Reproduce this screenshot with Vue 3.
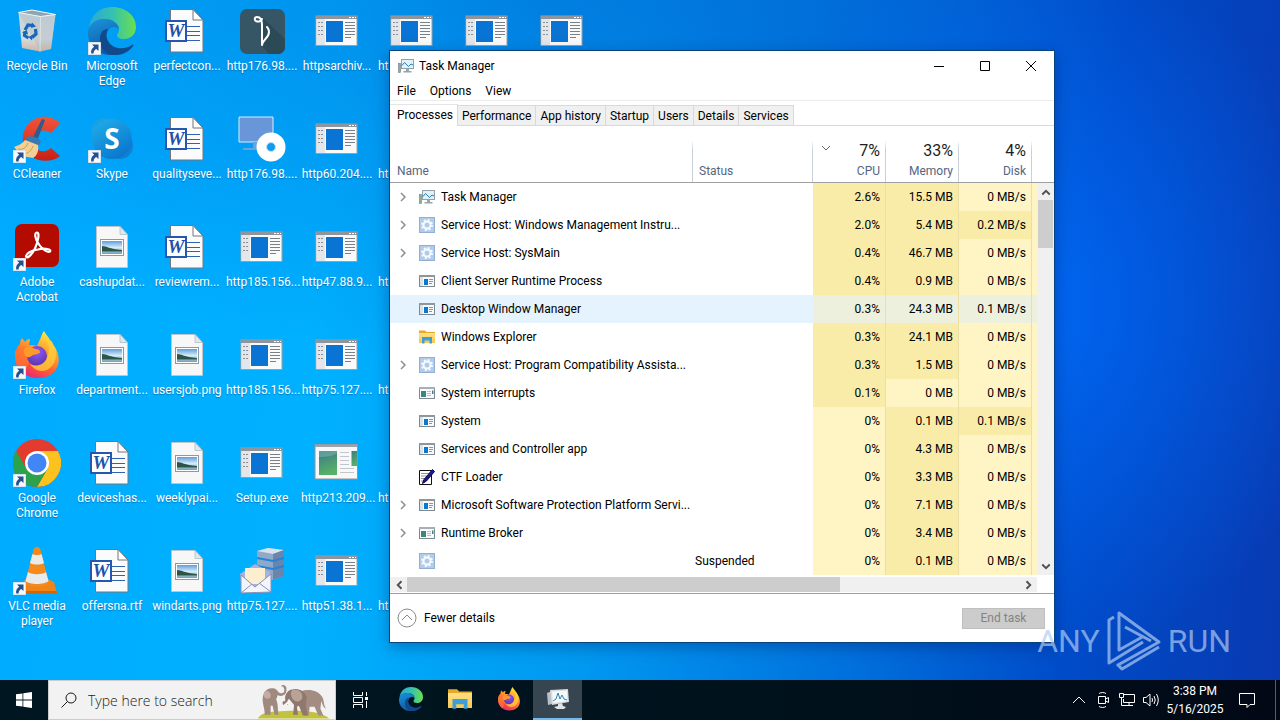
<template>
  <div class="screen">
    <svg class="sprite" aria-hidden="true">
      <defs>
        <linearGradient id="g-bin" x1="0" y1="0" x2="0" y2="1">
          <stop offset="0" stop-color="#c3d3dc" />
          <stop offset="0.7" stop-color="#d6dadd" />
          <stop offset="1" stop-color="#cdb5a6" />
        </linearGradient>
        <linearGradient id="g-edge-top" x1="0" y1="0.4" x2="1" y2="0.4">
          <stop offset="0" stop-color="#2aa8d8" />
          <stop offset="0.5" stop-color="#35c1b0" />
          <stop offset="1" stop-color="#6be04c" />
        </linearGradient>
        <linearGradient id="g-edge-mid" x1="0" y1="0" x2="0.4" y2="1">
          <stop offset="0" stop-color="#1b95dd" />
          <stop offset="1" stop-color="#0c59a4" />
        </linearGradient>
        <linearGradient id="g-skype" x1="0" y1="0" x2="0.6" y2="1">
          <stop offset="0" stop-color="#22b0ea" />
          <stop offset="1" stop-color="#0a78cf" />
        </linearGradient>
        <linearGradient id="g-fox" x1="0.8" y1="0" x2="0.3" y2="1">
          <stop offset="0" stop-color="#fff44f" />
          <stop offset="0.35" stop-color="#ffa72b" />
          <stop offset="0.7" stop-color="#ff5a36" />
          <stop offset="1" stop-color="#e8227a" />
        </linearGradient>
        <radialGradient id="g-globe" cx="0.5" cy="0.3" r="0.7">
          <stop offset="0" stop-color="#9059ff" />
          <stop offset="1" stop-color="#5a35a8" />
        </radialGradient>
        <linearGradient id="g-photo" x1="0" y1="0" x2="0" y2="1">
          <stop offset="0" stop-color="#5f9ddd" />
          <stop offset="0.5" stop-color="#d4ebf8" />
          <stop offset="1" stop-color="#6f9fb5" />
        </linearGradient>
        <linearGradient id="g-green" x1="0" y1="0" x2="0.3" y2="1">
          <stop offset="0" stop-color="#3a7888" />
          <stop offset="1" stop-color="#58b068" />
        </linearGradient>
        <linearGradient id="g-cc" x1="0" y1="0" x2="0" y2="1">
          <stop offset="0" stop-color="#f2543a" />
          <stop offset="1" stop-color="#c81f16" />
        </linearGradient>
        <linearGradient id="g-folder" x1="0" y1="0" x2="0" y2="1">
          <stop offset="0" stop-color="#ffe08a" />
          <stop offset="1" stop-color="#f7c84a" />
        </linearGradient>
      </defs>

      <symbol id="i-shortcut" viewBox="0 0 13 13">
        <rect width="13" height="13" fill="#f6f8fb" stroke="#b9cfdf" />
        <path d="M4 2.500h6.500v6.500L8.300 6.900C6.300 8 5.600 9.300 5.600 11.500H3.200C2.600 8.300 4 6.200 6.200 4.800z" fill="#24518f" />
      </symbol>

      <symbol id="i-bin" viewBox="0 0 48 48">
        <path d="M5.500 5.500 19 3l23.500 4.500L38 42l-11 2.500-18-3.500z" fill="url(#g-bin)" />
        <path d="M5.500 5.500 27 9l15.500-1.500L38 42l-11 2.500z" fill="#a9b7bf" opacity=".35" />
        <path d="M5.500 5.500 19 3l23.500 4.500L27.500 9.500z" fill="#8ea4b0" stroke="#f2f6f8" stroke-width="1" />
        <path d="m27.500 9.500-.5 35" stroke="#e9eef1" stroke-width=".7" />
        <g fill="none" stroke="#1668b8" stroke-width="3.200">
          <path d="m12 23 3-5 5 .5" />
          <path d="m22.500 22 .5 5-4 3.500" />
          <path d="m15.500 31-4-2.500.5-4" />
        </g>
        <path d="m19 15.500 4 4-5 1.500zM20 27.500l-1 6-3.500-3.500zM9 25.500l5-2.500 1 4.500z" fill="#1668b8" />
      </symbol>

      <symbol id="i-edge" viewBox="0 0 48 48">
        <path d="M1 22C2 9 11 0 24 0c14 0 24 9 24 20 0 8-6 12-12 12-5 0-7-2-7-4 0-1 2-2 2-6 0-5-6-10-14-10C8 12 2 17 1 22z" fill="url(#g-edge-top)" />
        <path d="M0 26c0-8 7-14 16-14 8 0 14 4 15 10-3-3-9-3-12 3-4 9 2 20 15 20-3 2-7 3-11 3C9 48 0 38 0 26z" fill="url(#g-edge-mid)" />
        <path d="M19 25c-2 6 2 14 11 16 6 1 11-1 14-3 1-1 2 0 1 1-4 6-12 10-20 9-9-1-14-9-13-16 0-6 3-10 8-10 0 1-1 2-1 3z" fill="#114a8b" />
      </symbol>

      <symbol id="i-word" viewBox="0 0 48 48">
        <path d="M7.500 2.500H30l10 10.500v32H7.500z" fill="#fbfbfc" stroke="#6f7780" />
        <path d="M30 2.500V13h10z" fill="#fff" stroke="#6f7780" />
        <path d="M24 19.500h13M24 24.500h13M24 28.500h13M24 33.500h13" stroke="#2f62b0" stroke-width="1.200" />
        <rect x="3" y="14" width="20" height="20" fill="#fff" stroke="#2458b0" stroke-width="2" />
      </symbol>

      <symbol id="i-pen" viewBox="0 0 48 48">
        <rect x="2" y="2" width="45" height="45" rx="7" fill="#365665" />
        <path d="m24 10 23 22v8a7 7 0 0 1-7 7H31l-7-8z" fill="#2a4653" opacity=".8" />
        <path d="M24 38V18c0-5-1-8-5-8-3 0-3 4 0 4.500 2 .5 5-1 5-2.500M24 38c1-6 7-7 7-13 0-2-1-4-2-5" fill="none" stroke="#fff" stroke-width="2" stroke-linecap="round" />
      </symbol>

      <symbol id="i-disc" viewBox="0 0 48 48">
        <path d="M1 2h34v25H1z" fill="#6896d8" stroke="#d8ecff" />
        <path d="M15 27h6v6h5v2H5v-2h10z" fill="#6aa0dc" />
        <circle cx="33" cy="32" r="14.500" fill="#fff" />
        <circle cx="33" cy="32" r="4.500" fill="#129cf0" stroke="#c5e4f8" />
      </symbol>

      <symbol id="i-exe" viewBox="0 0 48 48">
        <rect x="3" y="9" width="41" height="29.500" fill="#fafafa" stroke="#9a9fa6" />
        <path d="M3 9h41v3H3z" fill="#8f959c" />
        <path d="M36 10.500h2M39 10.500h2M42 10.500h1" stroke="#fff" />
        <path d="M3.500 12h8.500v26H3.500z" fill="#e4e6e9" />
        <path d="M5 15.500h6M5 19.500h6M5 23.500h6M5 27.500h6" stroke="#8a9098" stroke-dasharray="2 1" />
        <rect x="13" y="14" width="17" height="21" fill="#0a74d4" />
        <path d="M32 15.500h10M32 18.500h10M32 21.500h10M32 24.500h10M32 27.500h10M32 30.500h6" stroke="#7a8088" />
      </symbol>

      <symbol id="i-pic" viewBox="0 0 48 48">
        <path d="M8.500 3.500H32l7.500 8v33h-31z" fill="#f7f7f8" stroke="#bcc6cc" />
        <path d="M32 3.500v8h7.500z" fill="#dfe8f0" stroke="#a9b6be" stroke-width=".7" />
        <rect x="12.500" y="16.500" width="23" height="16" fill="#fff" stroke="#8a9aa5" />
        <rect x="14" y="18" width="20" height="13" fill="url(#g-photo)" />
        <path d="M14 23c5 0 7 3 20 4v1.500H14z" fill="#2c5548" />
      </symbol>

      <symbol id="i-green" viewBox="0 0 48 48">
        <rect x="2" y="5.500" width="42.500" height="34.500" fill="#f8f8f8" stroke="#8d949a" />
        <path d="M2 5.500h42.500V8H2z" fill="#9ca3aa" />
        <rect x="6" y="12" width="18" height="24" fill="url(#g-green)" />
        <path d="M6 18c8 0 14-1 18-4v-2H6z" fill="#8fc7c0" opacity=".4" />
        <path d="M27 13.500h9M27 17.500h9M27 21.500h9M27 25.500h9M27 29.500h14M27 33.500h14" stroke="#c2c6ca" />
        <path d="M38.500 12H44v15h-5.500z" fill="url(#g-green)" />
      </symbol>

      <symbol id="i-adobe" viewBox="0 0 48 48">
        <rect x="2" y="1" width="44" height="43" rx="7" fill="#b30b00" />
        <path d="M24 9.500c-3 0-2 7 2 12 4 6 9 8 11 7 2-2-5-4-12-2-7 1-12 4-12 7 1 3 6-2 9-8 3-7 5-16 2-16z" fill="none" stroke="#fff" stroke-width="2.200" />
      </symbol>

      <symbol id="i-firefox" viewBox="0 0 48 48">
        <path d="M28 6c1-3 2-5 3-6 2 4 4 5 6 9 0 0 2 1 3 4 7 10 8 20 1 28-9 9-27 8-35-3C0 29 1 18 7 13c0-3 1-5 2-6l3 4c1-2 3-3 5-3l-1 6c3 0 6 0 8 1z" fill="url(#g-fox)" />
        <path d="M2 20c3 0 5-5 10-4-1 6 2 9 5 13l-6 14C4 38 1 30 2 20z" fill="#ff7a2e" opacity=".7" />
        <circle cx="24" cy="25" r="10" fill="url(#g-globe)" />
        <path d="M12 17c4-2 8-1 10 1 3 0 5 1 5 3s-4 2-7 3c-2 1-3 3-6 2-3-2-4-5-2-9z" fill="#ff9a2b" />
        <path d="M31 4c5 7 6 12 4 20-2 9-11 13-18 9 8 12 24 8 26-8 1-9-5-13-7-17-2-3-3-4-5-4z" fill="#ffd23c" opacity=".75" />
      </symbol>

      <symbol id="i-chrome" viewBox="0 0 48 48">
        <circle cx="24" cy="24" r="24" fill="#e33b2e" />
        <path d="M24 12h20.800A24 24 0 0 1 24 48l10.400-18z" fill="#fcc31e" />
        <path d="M3.200 12 13.600 30 24 36l10.400-6L24 48A24 24 0 0 1 3.200 12z" fill="#2ba24c" />
        <circle cx="24" cy="24" r="12" fill="#fff" />
        <circle cx="24" cy="24" r="9.500" fill="#4285f4" />
      </symbol>

      <symbol id="i-vlc" viewBox="0 0 48 48">
        <path d="M13 32h22l6 3 3 11H7l3-11z" fill="#f08418" />
        <path d="M7 44h37v2.500H7z" fill="#d46406" />
        <path d="M24 0c2 0 3 1 3.500 3L36 36c-3 5-20 5-24 0l8.500-33C21 1 22 0 24 0z" fill="#f58a1c" />
        <path d="m19.500 7-2.500 9c3 2 11 2 14 0l-2.500-9c-2 1.500-7 1.500-9 0zM15 25l-2.500 9c4 4 19 4 23 0L33 25c-4 3-14 3-18 0z" fill="#e9eaeb" />
      </symbol>

      <symbol id="i-cc" viewBox="0 0 48 48">
        <path d="M47 8 38 18c-7-5-16-2-16 8 0 11 9 13 16 7l9 8c-13 10-34 4-37-13C8 12 20 0 35 2c5 1 9 3 12 6z" fill="url(#g-cc)" />
        <path d="m29 4 3 1-8 21-5-2z" fill="#2d5d8a" />
        <path d="M14 22c3-2 12 0 14 5l-3 4-13-5z" fill="#3a78b0" />
        <path d="M1 32c3-1 8-3 11-7l13 5c1 6-1 11-5 13L9 41z" fill="#f2cf92" />
        <path d="M5 34c5 1 8-1 10-6M10 39c5 0 9-4 10-8" fill="none" stroke="#cf9d50" />
      </symbol>

      <symbol id="i-skype" viewBox="0 0 48 48">
        <circle cx="16" cy="16" r="13" fill="#1aa0e4" />
        <circle cx="32" cy="31" r="13" fill="#0f80d2" />
        <circle cx="24" cy="24" r="20" fill="url(#g-skype)" />
      </symbol>

      <symbol id="i-mail" viewBox="0 0 48 48">
        <path d="M19 4 30 1l16 2v26l-11 4-16-3z" fill="#8fa9c8" />
        <path d="M19 4 30 1l16 2-11 4z" fill="#d8e2ee" />
        <path d="M35 7v26l11-4V3z" fill="#6c84ac" />
        <path d="m19 11 16 3 11-3M19 19l16 3 11-3" fill="none" stroke="#2484d8" stroke-width="2" />
        <path d="M2 27 17 17l15 8v20L4 46z" fill="#a9b2dc" />
        <path d="M7 21h20v16H7z" fill="#fdeed0" />
        <path d="m3 28 14 12 16-13v18L3 46z" fill="#f4f5fc" stroke="#8791b8" />
        <path d="m3 46 11-9M33 45l-12-9" stroke="#8791b8" />
      </symbol>

      <symbol id="i-taskmgr" viewBox="0 0 16 16">
        <rect x="0.500" y="5.500" width="2" height="9" fill="#8fae98" stroke="#707c84" stroke-width=".6" />
        <rect x="3.500" y="1.500" width="12" height="9" fill="#e2f1f8" stroke="#93a1aa" />
        <path d="M4 7.500 6.500 4.500 9 7l1.500 1.500L13 6l2 1" fill="none" stroke="#267cb4" />
        <path d="M8 11h3v2h2.500v1.500h-8V13H8z" fill="#98a3aa" />
      </symbol>

      <symbol id="i-taskmgr-large" viewBox="0 0 24 24">
        <path d="M1 6 6 4v13l-4 1z" fill="#b9c1c6" />
        <path d="m4 3 18-1 1 13-17 3z" fill="#d5dbdf" />
        <path d="m6 4.500 15-1 .5 10.500L7 16z" fill="#f4f9fb" />
        <path d="m7 14 3-2 2-6 2 6 2-4 2 4 3 1" fill="none" stroke="#3583b5" />
        <path d="m12 17 4-1 1 3 3 1-2 2h-7l-3-2 4-1z" fill="#dfe3e6" />
      </symbol>

      <symbol id="i-gear" viewBox="0 0 16 16">
        <rect x=".5" y=".5" width="15" height="15" fill="#b2cbe6" stroke="#92b0d4" />
        <circle cx="8" cy="8" r="3.500" fill="none" stroke="#f7fbff" stroke-width="2" />
        <circle cx="8" cy="8" r="5" fill="none" stroke="#f7fbff" stroke-width="2" stroke-dasharray="2 1.930" />
      </symbol>

      <symbol id="i-app" viewBox="0 0 16 16">
        <rect x=".5" y="2.500" width="15" height="11" fill="#f8fafb" stroke="#7d8891" />
        <path d="M0 2h16v2H0z" fill="#8b979f" />
        <path d="M1 4h3v9H1z" fill="#dbe3e8" />
        <path d="M5 6h4v6H5z" fill="#0878d0" />
        <path d="M10 6.500h4M10 8.500h4M10 10.500h3" stroke="#8a959c" />
      </symbol>

      <symbol id="i-system" viewBox="0 0 16 16">
        <rect x=".5" y="2.500" width="15" height="11" fill="#f8fafb" stroke="#7d8891" />
        <path d="M0 2h16v2H0z" fill="#a5afb5" />
        <path d="M2 6h5v6H2z" fill="#3f8579" />
        <path d="M8 6.500h4M8 8.500h4M8 10.500h4" stroke="#b5bcc2" />
        <path d="M13 5.500h1.500V9H13z" fill="#3f8579" />
      </symbol>

      <symbol id="i-folder" viewBox="0 0 16 16">
        <path d="M0 1.500h6L7.500 3H16v11H0z" fill="#e9a925" />
        <path d="M0 4h16v10H0z" fill="url(#g-folder)" />
        <path d="M3 8h10v6.500h-2.500v-3h-5v3H3z" fill="#3f9fd8" />
      </symbol>

      <symbol id="i-ctf" viewBox="0 0 16 16">
        <path d="M.5 1.500h12v14H.5z" fill="#fff" stroke="#111" />
        <path d="M2.500 4.500h8M2.500 7h7M2.500 9.500h5M2.500 12h3" stroke="#222" stroke-dasharray="1 1" />
        <path d="m13.500.5 2 2L7.500 12l-4 2.500 1.500-4z" fill="#1a1a9c" stroke="#05053c" />
      </symbol>
    </svg>

    <main class="desktop">
      <div class="icons">
        <a v-for="(item, i) in shortcuts" :key="i" href="#" class="shortcut" :class="{ covered: item.covered }">
          <span class="shortcut-image">
            <svg class="shortcut-icon" aria-hidden="true"><use :href="'#i-' + item.icon" /></svg>
            <span v-if="item.icon === 'word'" class="glyph-w" aria-hidden="true">W</span>
            <span v-if="item.icon === 'skype'" class="glyph-s" aria-hidden="true">S</span>
            <svg v-if="item.link" class="shortcut-arrow" aria-hidden="true"><use href="#i-shortcut" /></svg>
          </span>
          <span class="shortcut-label">{{ item.label }}</span>
        </a>
      </div>

      <section class="window" aria-labelledby="window-title">
        <header class="titlebar">
          <svg class="icon16" aria-hidden="true"><use href="#i-taskmgr" /></svg>
          <h1 id="window-title">Task Manager</h1>
          <div class="window-buttons">
            <button type="button" aria-label="Minimize">
              <svg viewBox="0 0 10 10"><path d="M0 5.500h10" /></svg>
            </button>
            <button type="button" aria-label="Maximize">
              <svg viewBox="0 0 10 10"><path d="M.5.500h9v9h-9z" /></svg>
            </button>
            <button type="button" aria-label="Close">
              <svg viewBox="0 0 10 10"><path d="m0 0 10 10M10 0 0 10" /></svg>
            </button>
          </div>
        </header>

        <nav class="menu">
          <button v-for="entry in menu" :key="entry" type="button">{{ entry }}</button>
        </nav>

        <div class="tabs" role="tablist">
          <button
            v-for="tab in tabs"
            :key="tab"
            type="button"
            role="tab"
            class="tab"
            :class="{ active: tab === activeTab }"
            :aria-selected="tab === activeTab"
            @click="activeTab = tab"
          >{{ tab }}</button>
        </div>

        <div class="list">
          <table class="processes">
            <thead>
              <tr>
                <th class="col-name" scope="col">Name</th>
                <th class="col-status" scope="col">Status</th>
                <th v-for="total in totals" :key="total.name" class="col-usage" scope="col">
                  <svg v-if="total.sorted" class="sort" viewBox="0 0 10 6" aria-hidden="true"><path d="m1 1 4 4 4-4" /></svg>
                  <strong>{{ total.value }}</strong>
                  <span>{{ total.name }}</span>
                </th>
                <th class="col-rest"></th>
              </tr>
            </thead>
            <tbody>
              <tr v-for="(row, i) in processes" :key="i" :class="{ hover: row.hover }">
                <td>
                  <div class="process">
                    <span class="expander">
                      <svg v-if="row.group" viewBox="0 0 6 10" aria-hidden="true"><path d="m1 1 4 4-4 4" /></svg>
                    </span>
                    <svg class="icon16" aria-hidden="true"><use :href="'#i-' + row.icon" /></svg>
                    <span>{{ row.name }}</span>
                  </div>
                </td>
                <td class="status">{{ row.status }}</td>
                <td
                  v-for="(value, n) in row.usage"
                  :key="n"
                  class="usage"
                  :class="{ warm: parseFloat(value) > 0 }"
                >{{ value }}</td>
                <td class="usage rest"></td>
              </tr>
            </tbody>
          </table>
          <div class="side">
            <div class="side-head"></div>
            <div class="vscroll">
              <button type="button" aria-label="Scroll up"><svg viewBox="0 0 8 8"><path d="m1 6 3-3 3 3" /></svg></button>
              <div class="vthumb"></div>
              <button type="button" aria-label="Scroll down"><svg viewBox="0 0 8 8"><path d="m1 2 3 3 3-3" /></svg></button>
            </div>
          </div>
        </div>

        <div class="hscroll">
          <button type="button" aria-label="Scroll left"><svg viewBox="0 0 8 8"><path d="M6 1 3 4l3 3" /></svg></button>
          <div class="hthumb"></div>
          <div class="htrack"></div>
          <button type="button" aria-label="Scroll right"><svg viewBox="0 0 8 8"><path d="m2 1 3 3-3 3" /></svg></button>
        </div>

        <footer class="window-footer">
          <button type="button" class="fewer">
            <svg viewBox="0 0 20 20" aria-hidden="true"><circle cx="10" cy="10" r="9" /><path d="m5 12 5-5 5 5" /></svg>
            Fewer details
          </button>
          <button type="button" class="end-task" disabled>End task</button>
        </footer>
      </section>

      <div class="watermark">
        <span>ANY</span>
        <svg viewBox="0 0 56 62" aria-hidden="true">
          <path d="M8 7 3 10v43l34-21M12 55l41-23L13 3v37l25-14M19 17l26 14M11 54l5 5 37-22" />
        </svg>
        <span>RUN</span>
      </div>
    </main>

    <footer class="taskbar">
      <button type="button" class="start" aria-label="Start">
        <svg viewBox="0 0 16 16"><path d="m0 2.300 6.500-.9v6.100H0zM7.300 1.300 16 0v7.500H7.300zM0 8.400h6.500v6.200L0 13.700zM7.300 8.400H16V16l-8.700-1.300z" /></svg>
      </button>
      <label class="search">
        <svg class="search-icon" viewBox="0 0 16 16" aria-hidden="true"><circle cx="10" cy="6" r="5" /><path d="M6.500 9.500.5 15.500" /></svg>
        <input type="text" placeholder="Type here to search" aria-label="Search" />
        <svg class="elephants" viewBox="0 0 80 38" aria-hidden="true">
          <path d="M1 38c2-5 10-7 18-7 20-2 46-2 55 7z" fill="#c3c23c" />
          <path d="M8 34c0-7-3-12-2-18 1-6 5-10 10-9 3 0 5 2 6 4 3 2 6 1 6-2 0-2-1-4-3-4 0-2 4-2 5 1 1 5-1 9-6 9l-3-1-1 5c2 5 1 10 2 15h-4l-2-9-2 0 0 9z" fill="#a08a80" />
          <path d="M7 11c3-3 8 0 7 5-2 3-6 2-7-1z" fill="#c3ada2" />
          <path d="m20 17 4 2-4 0z" fill="#fff5e6" />
          <path d="M45 10c8-3 18-1 22 6 2 4 1 8 4 12-4-2-4-6-5-8l-1 8 3 7h-5l-4-9-5 0-1 9h-5l-1-9z" fill="#a38c81" />
          <path d="M29 19c-1-6 3-11 9-11 6-1 11 3 13 8l-1 9 2 10h-5l-4-10-2 1 1 8h-5l1-10-5-6c-2 0-2 4-1 6l-5 0c-1-1-1-3 0-4 1 1 2 0 2-1z" fill="#8f786d" />
          <path d="M36 9c7-2 12 3 10 9-3 4-8 3-10-1-1-3-2-5 0-8z" fill="#b9a398" />
          <path d="m32 20-5 4 2 1 5-3z" fill="#fff5e6" />
        </svg>
      </label>
      <button type="button" class="task-view" aria-label="Task view">
        <svg viewBox="0 0 18 16"><path d="M1.500 0v3.500h9V0M1.500 16v-3.500h9V16M1.500 5.500h9v5h-9zM14.500 0v4M14.500 9v7" /><path d="M13 5h3v3h-3z" class="solid" /></svg>
      </button>
      <button
        v-for="app in pinned"
        :key="app.icon"
        type="button"
        class="task"
        :class="{ running: app.running }"
        :aria-label="app.title"
      >
        <svg class="task-icon" aria-hidden="true"><use :href="'#i-' + app.icon" /></svg>
      </button>

      <div class="tray">
        <button type="button" aria-label="Show hidden icons">
          <svg viewBox="0 0 16 16"><path d="m2 11 6-6 6 6" /></svg>
        </button>
        <button type="button" aria-label="Camera">
          <svg viewBox="0 0 16 16"><path d="M4 1.500c2-1.300 5-1.300 7 0M4 14.500c2 1.300 5 1.300 7 0M3.500 4.500h7v7h-7zM10.500 7l3-1.500v5l-3-1.500" /></svg>
        </button>
        <button type="button" aria-label="Network">
          <svg viewBox="0 0 16 16"><path d="M5 2.500h10.500v8H4.500V7M10 10.500v3M6 13.500h8M.5 1.500h4v4h-4zM2.500 5.500v8H6" /></svg>
        </button>
        <button type="button" aria-label="Volume">
          <svg viewBox="0 0 16 16"><path d="M.5 5.500H3l4-3.500v12L3 10.500H.5zM9 6q1 2 0 4M11 4q2.500 4 0 8M13.500 2q3.500 6 0 12" /></svg>
        </button>
      </div>
      <time class="clock" datetime="2025-05-16T15:38">
        <span>3:38 PM</span>
        <span>5/16/2025</span>
      </time>
      <button type="button" class="notifications" aria-label="Notifications">
        <svg viewBox="0 0 16 16"><path d="M.5 1.500h15v11H11l-3 3v-3H.5z" /></svg>
      </button>
      <button type="button" class="show-desktop" aria-label="Show desktop"></button>
    </footer>
  </div>
</template>

<script setup>
import { ref } from 'vue'

// listed column by column, the way the desktop arranges them
const shortcuts = [
  { icon: 'bin', label: 'Recycle Bin' },
  { icon: 'cc', label: 'CCleaner', link: true },
  { icon: 'adobe', label: 'Adobe Acrobat', link: true },
  { icon: 'firefox', label: 'Firefox', link: true },
  { icon: 'chrome', label: 'Google Chrome', link: true },
  { icon: 'vlc', label: 'VLC media player', link: true },
  { icon: 'edge', label: 'Microsoft Edge', link: true },
  { icon: 'skype', label: 'Skype', link: true },
  { icon: 'pic', label: 'cashupdat...' },
  { icon: 'pic', label: 'department...' },
  { icon: 'word', label: 'deviceshas...' },
  { icon: 'word', label: 'offersna.rtf' },
  { icon: 'word', label: 'perfectcon...' },
  { icon: 'word', label: 'qualityseve...' },
  { icon: 'word', label: 'reviewrem...' },
  { icon: 'pic', label: 'usersjob.png' },
  { icon: 'pic', label: 'weeklypai...' },
  { icon: 'pic', label: 'windarts.png' },
  { icon: 'pen', label: 'http176.98....' },
  { icon: 'disc', label: 'http176.98....' },
  { icon: 'exe', label: 'http185.156...' },
  { icon: 'exe', label: 'http185.156...' },
  { icon: 'exe', label: 'Setup.exe' },
  { icon: 'mail', label: 'http75.127....' },
  { icon: 'exe', label: 'httpsarchiv...' },
  { icon: 'exe', label: 'http60.204....' },
  { icon: 'exe', label: 'http47.88.9...' },
  { icon: 'exe', label: 'http75.127....' },
  { icon: 'green', label: 'http213.209...' },
  { icon: 'exe', label: 'http51.38.1...' },
  { icon: 'exe', label: 'ht', covered: true },
  { icon: 'exe', label: 'ht', covered: true },
  { icon: 'exe', label: 'ht', covered: true },
  { icon: 'exe', label: 'ht', covered: true },
  { icon: 'exe', label: 'ht', covered: true },
  { icon: 'exe', label: 'ht', covered: true },
  { icon: 'exe', label: '' },
  { icon: 'exe', label: '' },
  { icon: 'exe', label: '' },
  { icon: 'exe', label: '' },
  { icon: 'exe', label: '' },
  { icon: 'exe', label: '' },
  { icon: 'exe', label: '' }
]

const menu = ['File', 'Options', 'View']
const tabs = ['Processes', 'Performance', 'App history', 'Startup', 'Users', 'Details', 'Services']
const activeTab = ref('Processes')

const totals = [
  { name: 'CPU', value: '7%', sorted: true },
  { name: 'Memory', value: '33%' },
  { name: 'Disk', value: '4%' }
]

const processes = [
  { name: 'Task Manager', icon: 'taskmgr', group: true, usage: ['2.6%', '15.5 MB', '0 MB/s'] },
  { name: 'Service Host: Windows Management Instru...', icon: 'gear', group: true, usage: ['2.0%', '5.4 MB', '0.2 MB/s'] },
  { name: 'Service Host: SysMain', icon: 'gear', group: true, usage: ['0.4%', '46.7 MB', '0 MB/s'] },
  { name: 'Client Server Runtime Process', icon: 'app', usage: ['0.4%', '0.9 MB', '0 MB/s'] },
  { name: 'Desktop Window Manager', icon: 'app', hover: true, usage: ['0.3%', '24.3 MB', '0.1 MB/s'] },
  { name: 'Windows Explorer', icon: 'folder', usage: ['0.3%', '24.1 MB', '0 MB/s'] },
  { name: 'Service Host: Program Compatibility Assista...', icon: 'gear', group: true, usage: ['0.3%', '1.5 MB', '0 MB/s'] },
  { name: 'System interrupts', icon: 'system', usage: ['0.1%', '0 MB', '0 MB/s'] },
  { name: 'System', icon: 'app', usage: ['0%', '0.1 MB', '0.1 MB/s'] },
  { name: 'Services and Controller app', icon: 'app', usage: ['0%', '4.3 MB', '0 MB/s'] },
  { name: 'CTF Loader', icon: 'ctf', usage: ['0%', '3.3 MB', '0 MB/s'] },
  { name: 'Microsoft Software Protection Platform Servi...', icon: 'app', group: true, usage: ['0%', '7.1 MB', '0 MB/s'] },
  { name: 'Runtime Broker', icon: 'system', group: true, usage: ['0%', '3.4 MB', '0 MB/s'] },
  { name: '', icon: 'gear', status: 'Suspended', usage: ['0%', '0.1 MB', '0 MB/s'] }
]

const pinned = [
  { icon: 'edge', title: 'Microsoft Edge' },
  { icon: 'folder', title: 'File Explorer' },
  { icon: 'firefox', title: 'Firefox' },
  { icon: 'taskmgr-large', title: 'Task Manager', running: true }
]
</script>

<style>
body {
  margin: 0;
}
</style>

<style scoped>
.screen {
  display: flex;
  flex-direction: column;
  min-height: 100vh;
  overflow: hidden;
  font-family: Roboto, "Open Sans", sans-serif;
  font-size: 12px;
  line-height: 16px;
}

.screen * {
  box-sizing: border-box;
}

button {
  margin: 0;
  padding: 0;
  border: 0;
  background: none;
  color: inherit;
  font: inherit;
}

svg {
  display: block;
  flex: none;
}

.sprite {
  position: absolute;
  width: 0;
  height: 0;
}

.icon16 {
  width: 16px;
  height: 16px;
}

/* desktop */
.desktop {
  position: relative;
  flex: 1;
  background:
    radial-gradient(ellipse 26% 52% at 80% 45%, rgba(0, 110, 255, 0.75), rgba(0, 100, 255, 0) 100%),
    radial-gradient(ellipse 60% 60% at 45% -5%, rgba(0, 70, 190, 0.4), rgba(0, 90, 200, 0) 100%),
    linear-gradient(95deg, #00abff 0%, #00b1ff 26%, #0098f0 48%, #0070dc 68%, #004bc8 84%, #083ab2 100%);
}

.icons {
  display: grid;
  grid-template-rows: repeat(6, 108px);
  grid-auto-flow: column;
  grid-auto-columns: 75px;
  padding-top: 7px;
}

.shortcut {
  display: flex;
  flex-direction: column;
  align-items: center;
  gap: 4px;
  padding-right: 1px;
  color: #fff;
  text-decoration: none;
}

.shortcut-image {
  position: relative;
  width: 48px;
  height: 48px;
}

.shortcut-icon {
  width: 48px;
  height: 48px;
}

.shortcut-arrow {
  position: absolute;
  left: 0;
  bottom: 0;
  width: 13px;
  height: 13px;
}

.glyph-w,
.glyph-s {
  position: absolute;
  text-align: center;
}

.glyph-w {
  top: 14px;
  left: 2px;
  width: 22px;
  color: #2052ac;
  font: italic 700 19px/20px "Liberation Serif", serif;
}

.glyph-s {
  top: 0;
  left: 0;
  width: 48px;
  color: #fff;
  font: 700 28px/46px "Open Sans", sans-serif;
}

.shortcut-label {
  max-width: 72px;
  line-height: 15px;
  text-align: center;
  text-shadow: 0 1px 1px rgba(0, 40, 90, 0.4);
}

/* only the start of these labels shows beside the window */
.covered .shortcut-label {
  align-self: flex-start;
  padding-left: 3px;
}

/* task manager window */
.window {
  position: absolute;
  top: 50px;
  left: 389px;
  width: 666px;
  border: 1px solid #07447f;
  background: #fff;
  color: #000;
  box-shadow: 0 4px 14px rgba(0, 20, 80, 0.35);
}

.titlebar {
  display: flex;
  align-items: center;
  gap: 5px;
  height: 30px;
  padding-left: 8px;
}

.titlebar h1 {
  flex: 1;
  margin: 0;
  font-size: 12px;
  font-weight: 400;
}

.window-buttons {
  display: flex;
}

.window-buttons button {
  display: grid;
  place-items: center;
  width: 46px;
  height: 30px;
}

.window-buttons svg {
  width: 10px;
  height: 10px;
  overflow: visible;
  fill: none;
  stroke: #000;
}

.menu {
  display: flex;
  gap: 14px;
  height: 20px;
  padding-left: 7px;
  border-bottom: 1px solid #ececec;
}

.tabs {
  display: flex;
  align-items: flex-end;
  height: 25px;
  padding-top: 3px;
  border-bottom: 1px solid #d9d9d9;
}

.tab {
  height: 20px;
  padding: 0 4px;
  border: 1px solid #d9d9d9;
  border-width: 1px 1px 0 0;
  background: #f0f0f0;
}

.tab.active {
  height: 22px;
  margin-bottom: -1px;
  padding: 0 4px 2px 7px;
  border-top-color: #e5e5e5;
  background: #fff;
}

.list {
  display: flex;
}

.processes {
  flex: 1;
  width: 100%;
  min-width: 0;
  border-collapse: separate;
  border-spacing: 0;
  table-layout: fixed;
}

th {
  height: 57px;
  padding: 0 6px 3px 7px;
  border-bottom: 1px solid #a0a0a0;
  background: linear-gradient(#fff 14px, #c8d0dc 24px) no-repeat right / 1px 100%;
  color: #56657f;
  font-weight: 400;
  text-align: left;
  vertical-align: bottom;
}

.col-status {
  width: 120px;
  padding-left: 6px;
}

.col-usage {
  position: relative;
  width: 73px;
  text-align: right;
}

.col-usage strong,
.col-usage span {
  display: block;
}

.col-usage strong {
  color: #1e1e1e;
  font-size: 16px;
  font-weight: 400;
  line-height: 24px;
}

.col-rest {
  width: 5px;
  padding: 0;
  background: none;
}

.sort {
  position: absolute;
  top: 19px;
  left: 8px;
  width: 10px;
  height: 6px;
  fill: none;
  stroke: #6a6a6a;
}

td {
  height: 28px;
  padding: 0;
  white-space: nowrap;
}

.process {
  display: flex;
  align-items: center;
  gap: 6px;
  padding-left: 10px;
}

.expander {
  width: 13px;
}

.expander svg {
  width: 6px;
  height: 10px;
  fill: none;
  stroke: #8c8c8c;
  stroke-width: 1.5;
}

.status {
  padding-left: 2px;
}

.usage {
  padding-right: 5px;
  border-right: 1px solid #ecdfa6;
  background: #fff4c4;
  text-align: right;
}

.usage.warm {
  background: #f9eca8;
}

.usage.rest {
  padding: 0;
  border: 0;
}

.hover td {
  background: #e5f3ff;
}

.hover .usage {
  background: #ecf0dc;
}

.side {
  display: flex;
  flex: none;
  flex-direction: column;
  width: 17px;
}

.side-head {
  height: 57px;
  border-bottom: 1px solid #a0a0a0;
}

.vscroll {
  display: flex;
  flex: 1;
  flex-direction: column;
  background: #f0f0f0;
}

.vscroll button,
.hscroll button {
  display: grid;
  place-items: center;
  width: 17px;
  height: 17px;
}

.vscroll button:last-child {
  margin-top: auto;
}

.vscroll svg,
.hscroll svg {
  width: 10px;
  height: 10px;
  fill: none;
  stroke: #505050;
  stroke-width: 1.5;
}

.vthumb {
  height: 48px;
  margin: 0 1px;
  background: #cdcdcd;
}

.hscroll {
  display: flex;
  height: 19px;
  padding: 2px 17px 1px 0;
  border-bottom: 1px solid #a0a0a0;
}

.hscroll button {
  height: 15px;
  background: #f0f0f0;
}

.hthumb {
  flex: 12;
  background: #cdcdcd;
}

.htrack {
  flex: 5;
  background: #f0f0f0;
}

.window-footer {
  display: flex;
  align-items: center;
  justify-content: space-between;
  height: 48px;
  padding: 0 9px 0 7px;
}

.fewer {
  display: flex;
  align-items: center;
  gap: 7px;
}

.fewer svg {
  width: 20px;
  height: 20px;
  fill: none;
  stroke: #8a8a8a;
}

.end-task {
  width: 83px;
  height: 21px;
  border: 1px solid #bfbfbf;
  background: #cccccc;
  color: #838383;
}

.watermark {
  position: absolute;
  right: 49px;
  bottom: 8px;
  display: flex;
  align-items: center;
  gap: 6px;
  color: rgba(175, 203, 240, 0.7);
  font-size: 32px;
  line-height: 62px;
}

.watermark svg {
  width: 56px;
  height: 62px;
  fill: none;
  stroke: currentColor;
  stroke-width: 3;
  stroke-linejoin: round;
}

/* taskbar */
.taskbar {
  position: relative;
  display: flex;
  height: 40px;
  background: linear-gradient(90deg, #001722, #00121c 60%, #020816);
  color: #fff;
}

.taskbar button {
  display: grid;
  place-items: center;
}

.start {
  width: 48px;
}

.start svg {
  width: 16px;
  height: 16px;
  fill: #fff;
}

.search {
  display: flex;
  align-items: center;
  width: 288px;
  padding-left: 12px;
  border: 1px solid #c9cdd0;
  background: #f2f2f2;
}

.search-icon {
  width: 16px;
  height: 16px;
  margin-right: 11px;
  fill: none;
  stroke: #1a1a1a;
}

.search input {
  flex: 1;
  min-width: 0;
  padding: 0;
  border: 0;
  outline: 0;
  background: none;
  font: 300 14px "Open Sans", sans-serif;
}

.search input::placeholder {
  color: #222;
  opacity: 1;
}

.elephants {
  align-self: flex-end;
  width: 78px;
  height: 38px;
}

.task-view {
  width: 50px;
}

.task-view svg {
  width: 18px;
  height: 16px;
  fill: none;
  stroke: #fff;
}

.task-view .solid {
  fill: #fff;
  stroke: none;
}

.task {
  width: 49px;
  border-bottom: 2px solid transparent;
}

.task.running {
  border-color: #76b9ed;
  background: #36454f;
}

.task-icon {
  width: 24px;
  height: 24px;
}

.tray {
  display: flex;
  gap: 8px;
  margin-left: auto;
}

.tray svg {
  width: 16px;
  height: 16px;
  overflow: visible;
  fill: none;
  stroke: #fff;
}

.clock {
  display: flex;
  flex-direction: column;
  justify-content: center;
  width: 72px;
  line-height: 18px;
  text-align: center;
}

.notifications {
  width: 32px;
}

.notifications svg {
  width: 16px;
  height: 16px;
  overflow: visible;
  fill: none;
  stroke: #fff;
}

.show-desktop {
  width: 5px;
  margin-left: 12px;
  border-left: 1px solid #56616b;
}
</style>
